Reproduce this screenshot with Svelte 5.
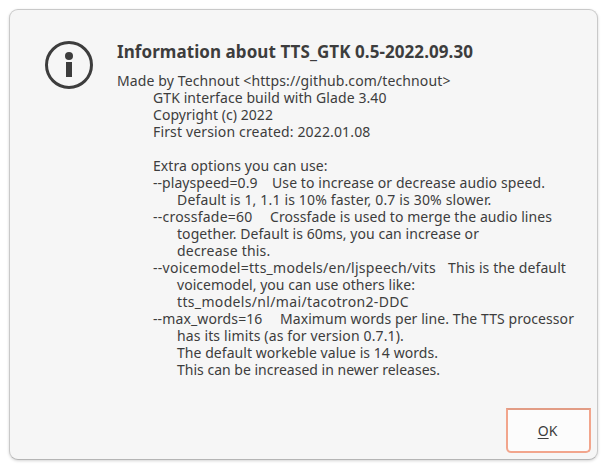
<script>
  // Each run: indent or gap before it, the width it occupies, and its text.
  const lines = [
    [[0, 333.5, 'Made by Technout <https://github.com/technout>']],
    [[36, 233.5, 'GTK interface build with Glade 3.40']],
    [[36, 120, 'Copyright (c) 2022']],
    [[36, 217.5, 'First version created: 2022.01.08']],
    [],
    [[36, 174.5, 'Extra options you can use:']],
    [[36, 104.5, '--playspeed=0.9'], [14.5, 273, 'Use to increase or decrease audio speed.']],
    [[60, 314.5, 'Default is 1, 1.1 is 10% faster, 0.7 is 30% slower.']],
    [[36, 99.5, '--crossfade=60'], [17.5, 282, 'Crossfade is used to merge the audio lines']],
    [[60, 302, 'together. Default is 60ms, you can increase or']],
    [[60, 93.5, 'decrease this.']],
    [[36, 283, '--voicemodel=tts_models/en/ljspeech/vits'], [12, 118, 'This is the default']],
    [[60, 238, 'voicemodel, you can use others like:']],
    [[60, 232, 'tts_models/nl/mai/tacotron2-DDC']],
    [[36, 109.5, '--max_words=16'], [17.5, 294, 'Maximum words per line. The TTS processor']],
    [[60, 227, 'has its limits (as for version 0.7.1).']],
    [[60, 261, 'The default workeble value is 14 words.']],
    [[60, 263, 'This can be increased in newer releases.']]
  ];

  // Spreads the letters of a run so that it fills its given width.
  function fit(node, width) {
    const natural = node.getBoundingClientRect().width;
    const count = node.textContent.length;
    node.style.letterSpacing = `${(width - natural) / count}px`;
  }
</script>

<main>
  <section class="dialog">
    <div class="content">
      <svg class="info" viewBox="0 0 48 48" width="48" height="48" aria-hidden="true">
        <circle cx="24" cy="24" r="22.5" fill="none" stroke="#3d3d3d" stroke-width="3" />
        <circle cx="24" cy="15" r="4" fill="#3d3d3d" />
        <rect x="21" y="21" width="6" height="15" fill="#3d3d3d" />
      </svg>
      <div class="message">
        <h1><span use:fit={356}>Information about TTS_GTK 0.5-2022.09.30</span></h1>
        {#each lines as runs}
          <div class="line">
            {#each runs as [gap, width, text]}
              <span class="run" style="margin-left: {gap}px" use:fit={width}>{text}</span>
            {/each}
          </div>
        {/each}
      </div>
    </div>
    <div class="actions">
      <button><span class="mnemonic">O</span>K</button>
    </div>
  </section>
</main>

<style>
  :global(body) {
    background: #fff;
  }
  main {
    box-sizing: border-box;
    width: 607px;
    height: 469px;
    padding: 9px;
    overflow: hidden;
  }
  .dialog {
    box-sizing: border-box;
    display: flex;
    flex-direction: column;
    justify-content: space-between;
    width: 589px;
    height: 451px;
    border: 1px solid #c9c9c9;
    border-bottom-color: #b5b5b5;
    border-radius: 9px;
    background: #f6f6f6;
    box-shadow: 0 1px 3px rgba(0, 0, 0, 0.17);
    color: #3d3d3d;
    font-family: "Noto Sans", "Open Sans", sans-serif;
  }
  .content {
    display: flex;
    gap: 24px;
    padding: 31px 0 0 35px;
  }
  .info {
    flex: none;
  }
  h1 {
    height: 31px;
    margin: 0;
    font-size: 17px;
    font-weight: 700;
    line-height: 22px;
    white-space: pre;
  }
  .line {
    display: flex;
    height: 17px;
    font-size: 14px;
    line-height: 17px;
    white-space: pre;
  }
  .run {
    flex: none;
  }
  .actions {
    display: flex;
    justify-content: flex-end;
    padding: 0 6px 6px 0;
  }
  button {
    box-sizing: border-box;
    width: 85px;
    height: 45px;
    padding: 0 2px 0 0;
    border: 2px solid #f2a58c;
    border-top-color: #e29c85;
    border-radius: 0 0 5px 5px;
    background: #fcfcfc;
    color: #3d3d3d;
    font: 14px "Noto Sans", "Open Sans", sans-serif;
  }
  .mnemonic {
    text-decoration: underline;
    text-decoration-thickness: 1px;
    text-underline-offset: 2px;
  }
</style>
